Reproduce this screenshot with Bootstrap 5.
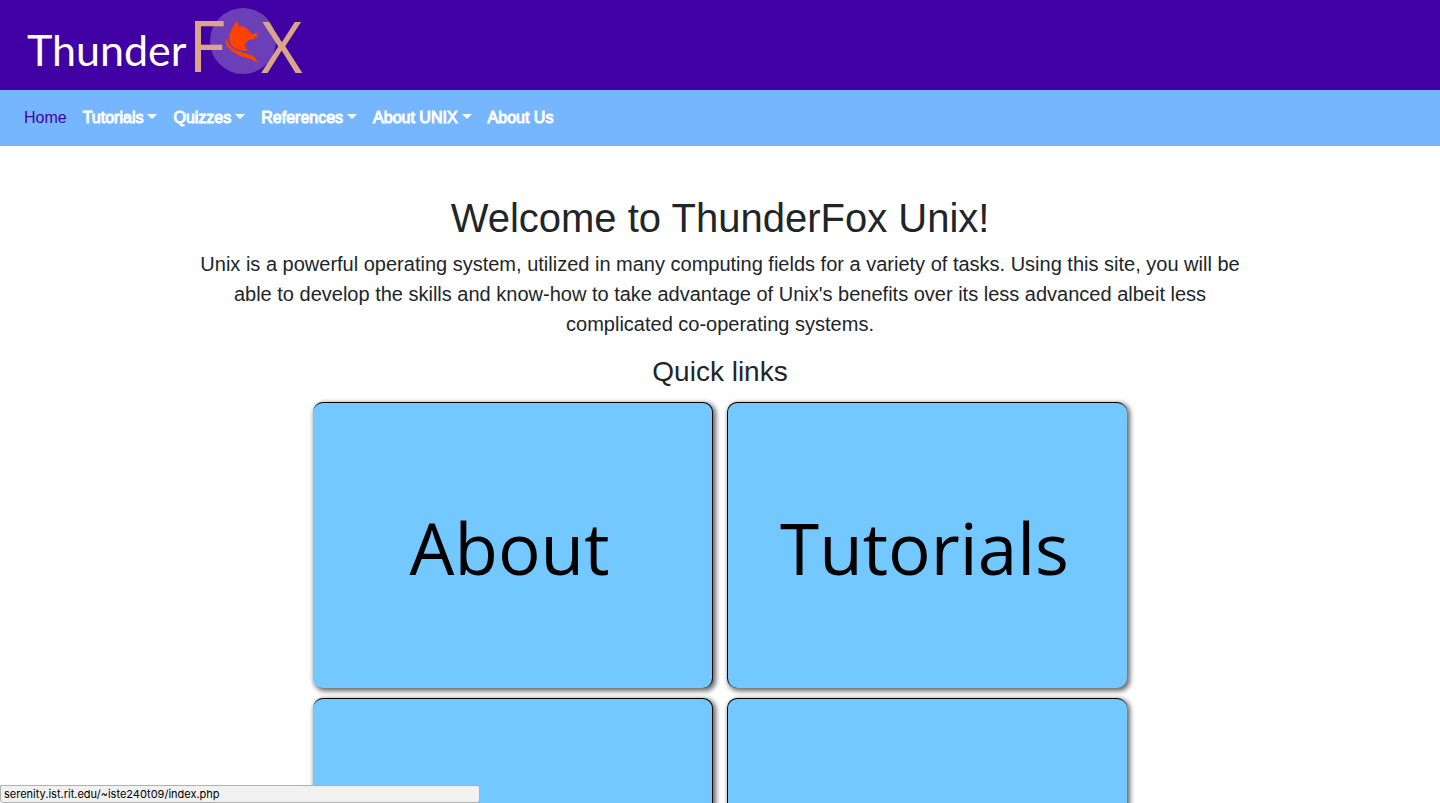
<!DOCTYPE html>
<html lang="en">
<head>
<meta charset="utf-8">
<meta name="viewport" content="width=device-width, initial-scale=1">
<title>ThunderFox Unix</title>
<link href="https://cdn.jsdelivr.net/npm/bootstrap@5.3.0/dist/css/bootstrap.min.css" rel="stylesheet">
<style>
body { font-family: "Liberation Sans", Arial, sans-serif; }
.site-header { background: #4100a3; height: 90px; }
.site-nav { background: #75b6ff; --bs-navbar-color: #fff; --bs-navbar-hover-color: #fff; --bs-navbar-active-color: #4100a3; }
.site-nav .nav-link { -webkit-text-stroke: 1px #fff; }
.site-nav .nav-link.active { -webkit-text-stroke: 0; }
.site-nav .dropdown-toggle::after { margin-left: 4px; border-width: 5px 5px 0; vertical-align: 4px; }
.intro h1 { font-size: 40px; line-height: 48px; margin-bottom: 7px; }
.intro h2 { font-size: 28px; line-height: 34px; margin-bottom: 13px; }
.intro .lead { max-width: 1080px; font-size: 20px; font-weight: 400; line-height: 30px; }
.tiles { display: grid; grid-template-columns: repeat(2, minmax(0, 400px)); justify-content: center; gap: 10px 14px; }
.tile { height: 286px; padding: 3px 6px 0 0; background: #72c8ff; border-radius: 10px; border-top: 1px solid #000; box-shadow: 2px 2px 5px 1px rgba(0,0,0,.6); color: #000; font: 71px "Open Sans", "Noto Sans", sans-serif; }
.tile:nth-child(odd) { border-right: 1px solid #000; }
.tile:nth-child(even) { border-left: 1px solid #000; }
.status-bar { width: 480px; height: 18px; background: #f1f1f1; border: 1px solid #b0b0b0; border-radius: 0 3px 3px 3px; padding: 0 3px; font: 11px/16px Inter, sans-serif; color: #000; }
</style>
</head>
<body>
<header class="site-header">
  <a href="#" class="d-inline-block" aria-label="ThunderFox home">
    <svg class="d-block" width="320" height="90" viewBox="0 0 320 90">
      <circle cx="243" cy="41" r="33" fill="#6b3fb8"/>
      <path fill="#ff4200" d="M236.500 21 L239 26 C243 26 247 27 249 31 L252 34 L257 33 L258 35 L257 37 L255 37 L254 39 L249 40 C247 42 245 42 245 45 C245 48 247 49 248 51 C242 51 236 50 232 46 C228 42 229 35 231 31 C232 28 234 25 236.500 21 Z"/>
      <path fill="#ff4200" d="M227 38 C227 42 229 45 231 47 C236 51 242 52 248 54 C254 56 256 58 258 63 C253 60 248 58 243 57 C236 55 230 50 227 46 C225 43 226 40 227 38 Z"/>
      <text x="27" y="66" font-family="Lato, sans-serif" font-size="43" fill="#fff">Thunder</text>
      <g fill="#dba58a" font-family="Open Sans, Noto Sans, sans-serif" font-size="72">
        <text x="188" y="72">F</text>
        <text x="261" y="73">X</text>
      </g>
    </svg>
  </a>
</header>
<nav class="navbar navbar-expand site-nav px-3 py-2" aria-label="Main">
  <ul class="navbar-nav flex-wrap">
    <li class="nav-item"><a class="nav-link active" aria-current="page" href="#">Home</a></li>
    <li class="nav-item dropdown"><a class="nav-link dropdown-toggle" href="#" data-bs-toggle="dropdown">Tutorials</a></li>
    <li class="nav-item dropdown"><a class="nav-link dropdown-toggle" href="#" data-bs-toggle="dropdown">Quizzes</a></li>
    <li class="nav-item dropdown"><a class="nav-link dropdown-toggle" href="#" data-bs-toggle="dropdown">References</a></li>
    <li class="nav-item dropdown"><a class="nav-link dropdown-toggle" href="#" data-bs-toggle="dropdown">About UNIX</a></li>
    <li class="nav-item"><a class="nav-link" href="#">About Us</a></li>
  </ul>
</nav>
<main class="container-xl pt-5 pb-5 intro text-center">
  <h1>Welcome to ThunderFox Unix!</h1>
  <p class="lead mb-3 mx-auto">Unix is a powerful operating system, utilized in many computing fields for a variety of tasks. Using this site, you will be able to develop the skills and know-how to take advantage of Unix's benefits over its less advanced albeit less complicated co-operating systems.</p>
  <h2>Quick links</h2>
  <div class="tiles">
    <a href="#" class="tile d-flex align-items-center justify-content-center text-decoration-none">About</a>
    <a href="#" class="tile d-flex align-items-center justify-content-center text-decoration-none">Tutorials</a>
    <a href="#" class="tile" aria-label="Quizzes"></a>
    <a href="#" class="tile" aria-label="References"></a>
  </div>
</main>
<div class="status-bar position-fixed bottom-0 start-0">serenity.ist.rit.edu/~iste240t09/index.php</div>
<script src="https://cdn.jsdelivr.net/npm/bootstrap@5.3.0/dist/js/bootstrap.bundle.min.js"></script>
</body>
</html>
